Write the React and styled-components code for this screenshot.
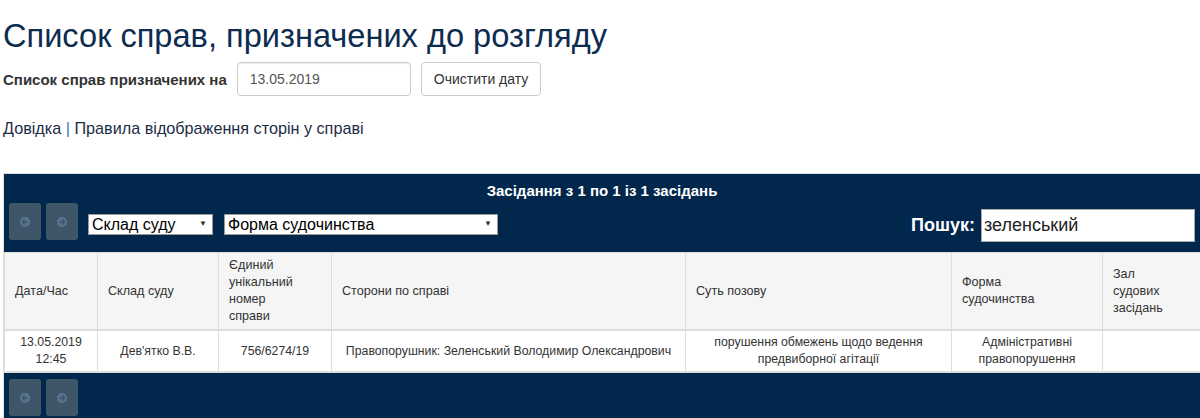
import React from "react";
import styled, { createGlobalStyle } from "styled-components";

const GlobalStyle = createGlobalStyle`
  html, body {
    margin: 0;
    padding: 0;
    background: #fff;
    overflow-x: hidden;
  }
  body {
    font-family: "Liberation Sans", Arial, sans-serif;
    color: #333;
  }
`;

const Page = styled.div`
  padding-left: 3px;
  width: 1197px;
`;

const Title = styled.h1`
  margin: 18px 0 9px;
  font-size: 32.6px;
  line-height: 35px;
  font-weight: 400;
  color: #0d2c50;
`;

const DateForm = styled.div`
  display: flex;
  align-items: center;
  gap: 10px;
`;

const Label = styled.label`
  font-size: 15px;
  font-weight: 700;
  color: #333;
`;

const DateInput = styled.input`
  box-sizing: border-box;
  width: 174px;
  height: 34px;
  padding: 6px 12px;
  border: 1px solid #ccc;
  border-radius: 4px;
  font-family: inherit;
  font-size: 14px;
  color: #555;
  box-shadow: inset 0 1px 1px rgba(0, 0, 0, 0.075);
`;

const ClearButton = styled.button`
  box-sizing: border-box;
  height: 34px;
  padding: 6px 12px;
  background: #fff;
  border: 1px solid #ccc;
  border-radius: 4px;
  font-family: inherit;
  font-size: 14px;
  color: #333;
  cursor: pointer;
`;

const Links = styled.p`
  margin: 22px 0 0;
  font-size: 16.2px;
  line-height: 20px;
  color: #1c2d45;
`;

const Link = styled.a`
  color: #1c2d45;
  text-decoration: none;
`;

const Sep = styled.span`
  color: #337ab7;
`;

const Panel = styled.div`
  margin-top: 35px;
  background: #01274d;
  border: 1px solid #ddd;
  border-right: none;
  border-bottom: none;
`;

const Caption = styled.div`
  padding-top: 7px;
  text-align: center;
  font-size: 15px;
  line-height: 20px;
  font-weight: 700;
  color: #fff;
`;

const Toolbar = styled.div`
  display: flex;
  align-items: flex-start;
  padding: ${(p) => (p.$bottom ? "6px 5px 6px 5px" : "2px 5px 10px 5px")};
`;

const NavGroup = styled.div`
  display: flex;
  gap: 5px;
  margin-right: 10px;
`;

const NavButton = styled.button`
  width: 32px;
  height: 37px;
  padding: 0;
  border: none;
  border-radius: 3px;
  background: #3e5667;
  display: flex;
  align-items: center;
  justify-content: center;
  cursor: default;
`;

const SelectWrap = styled.div`
  position: relative;
  width: ${(p) => p.$w}px;
  margin: 11px 11px 0 0;
`;

const Select = styled.select`
  appearance: none;
  box-sizing: border-box;
  width: 100%;
  height: 21px;
  padding: 0 16px 0 3px;
  border: 1px solid #999;
  border-radius: 0;
  background: #fff;
  font-family: inherit;
  font-size: 16px;
  color: #000;
`;

const Arrow = styled.span`
  position: absolute;
  right: 6px;
  top: 5px;
  font-size: 8px;
  color: #333;
  pointer-events: none;
`;

const Spacer = styled.div`
  flex: 1;
`;

const SearchLabel = styled.label`
  display: flex;
  align-items: center;
  gap: 6px;
  margin-top: 6px;
  font-size: 18px;
  font-weight: 700;
  color: #fff;
`;

const SearchInput = styled.input`
  box-sizing: border-box;
  width: 214px;
  height: 33px;
  padding: 2px 2px;
  border: 1px solid #aaa;
  border-radius: 0;
  font-family: inherit;
  font-size: 18px;
  color: #222;
`;

const Table = styled.table`
  width: 1210px;
  border-collapse: collapse;
  background: #fff;
  color: #333;
  table-layout: fixed;
`;

const Th = styled.th`
  box-sizing: border-box;
  width: ${(p) => p.$w}px;
  padding: 4px 10px;
  background: #f5f5f5;
  border: 1px solid #ddd;
  border-bottom-width: 2px;
  font-size: 12.6px;
  line-height: 17px;
  font-weight: 400;
  text-align: left;
  vertical-align: middle;
`;

const Td = styled.td`
  padding: 3px 8px;
  border: 1px solid #ddd;
  border-bottom: 2px solid #ddd;
  font-size: 12.3px;
  line-height: 17px;
  text-align: center;
  vertical-align: middle;
`;

const NavIcon = ({ dir }) => (
  <svg width="12" height="12" viewBox="0 0 12 12">
    <circle cx="6" cy="6" r="5" fill="#587390" />
    {dir === "left" ? (
      <path d="M3.4 6 L5.8 3.6 M3.4 6 L5.8 8.4 M3.4 6 H8.6" stroke="#3e5667" strokeWidth="1.5" fill="none" />
    ) : (
      <path d="M8.6 6 L6.2 3.6 M8.6 6 L6.2 8.4 M8.6 6 H3.4" stroke="#3e5667" strokeWidth="1.5" fill="none" />
    )}
  </svg>
);

const Nav = () => (
  <NavGroup>
    <NavButton>
      <NavIcon dir="left" />
    </NavButton>
    <NavButton>
      <NavIcon dir="right" />
    </NavButton>
  </NavGroup>
);

const columns = [
  { lines: ["Дата/Час"], w: 93 },
  { lines: ["Склад суду"], w: 121 },
  { lines: ["Єдиний", "унікальний", "номер", "справи"], w: 113 },
  { lines: ["Сторони по справі"], w: 354 },
  { lines: ["Суть позову"], w: 266 },
  { lines: ["Форма", "судочинства"], w: 151 },
  { lines: ["Зал", "судових", "засідань"], w: 112 },
];

const rows = [
  [
    ["13.05.2019", "12:45"],
    ["Дев'ятко В.В."],
    ["756/6274/19"],
    ["Правопорушник: Зеленський Володимир Олександрович"],
    ["порушення обмежень щодо ведення", "предвиборної агітації"],
    ["Адміністративні", "правопорушення"],
    [],
  ],
];

const Lines = ({ lines }) =>
  lines.map((l, i) => (
    <React.Fragment key={i}>
      {i > 0 && <br />}
      {l}
    </React.Fragment>
  ));

export default function App() {
  return (
    <>
      <GlobalStyle />
      <Page>
        <Title>Список справ, призначених до розгляду</Title>
        <DateForm>
          <Label>Список справ призначених на</Label>
          <DateInput defaultValue="13.05.2019" />
          <ClearButton>Очистити дату</ClearButton>
        </DateForm>
        <Links>
          <Link href="#">Довідка</Link> <Sep>|</Sep>{" "}
          <Link href="#">Правила відображення сторін у справі</Link>
        </Links>

        <Panel>
          <Caption>Засідання з 1 по 1 із 1 засідань</Caption>
          <Toolbar>
            <Nav />
            <SelectWrap $w={125}>
              <Select>
                <option>Склад суду</option>
              </Select>
              <Arrow>▼</Arrow>
            </SelectWrap>
            <SelectWrap $w={274}>
              <Select>
                <option>Форма судочинства</option>
              </Select>
              <Arrow>▼</Arrow>
            </SelectWrap>
            <Spacer />
            <SearchLabel>
              Пошук:
              <SearchInput defaultValue="зеленський" />
            </SearchLabel>
          </Toolbar>
          <Table>
            <thead>
              <tr>
                {columns.map((c, i) => (
                  <Th key={i} $w={c.w}>
                    <Lines lines={c.lines} />
                  </Th>
                ))}
              </tr>
            </thead>
            <tbody>
              {rows.map((r, i) => (
                <tr key={i}>
                  {r.map((cell, j) => (
                    <Td key={j}>
                      <Lines lines={cell} />
                    </Td>
                  ))}
                </tr>
              ))}
            </tbody>
          </Table>
          <Toolbar $bottom>
            <Nav />
          </Toolbar>
        </Panel>
      </Page>
    </>
  );
}
